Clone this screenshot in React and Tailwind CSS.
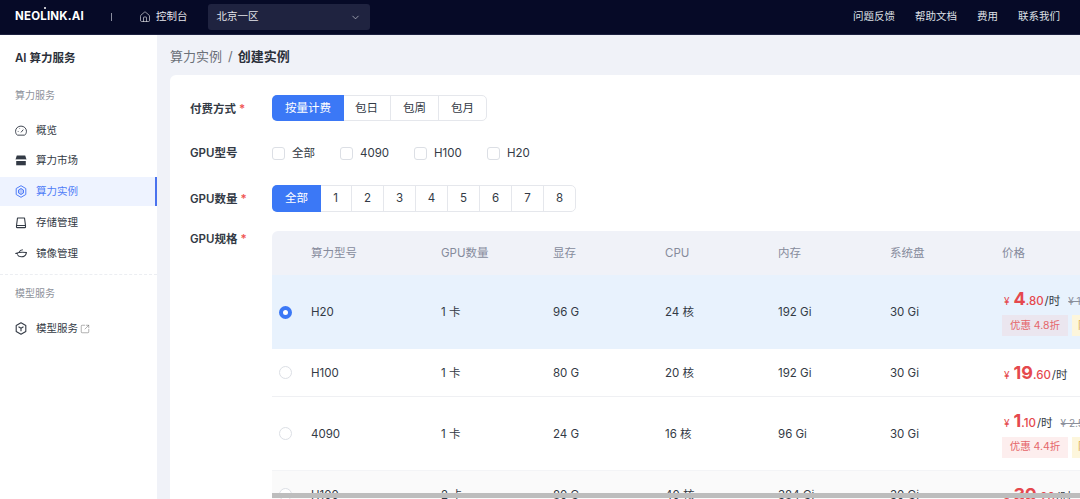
import React from "react";
import { House, ChevronDown, SquareArrowOutUpRight } from "lucide-react";

const font = { fontFamily: '"Inter","Noto Sans CJK SC",sans-serif' };
const cols = "grid grid-cols-[27px_130px_112px_112px_113px_112px_112px_300px]";

function GaugeIcon() {
  return (
    <svg width="13" height="12" viewBox="0 0 13 12" fill="none" stroke="currentColor" strokeWidth="1">
      <path d="M2.500 10.500C1.300 9.500.6 8 .6 6.300.6 3.100 3.200.7 6.500.7s5.900 2.400 5.900 5.600c0 1.700-.7 3.200-1.900 4.200z" />
      <path d="M6.500 7.500L9 4.500" />
      <path d="M3 6.500h.8M5 3.300l.4.5M8 3h.1" />
    </svg>
  );
}
function StoreIcon() {
  return (
    <svg width="12" height="11" viewBox="0 0 12 11" fill="currentColor">
      <path d="M1.800.6h8.400L11.500 4.500H.5z" />
      <path d="M1.200 6h9.600v4.300H1.200z" />
      <path d="M1.200 5h9.600" stroke="#fff" strokeWidth=".6" />
    </svg>
  );
}
function HexIcon() {
  return (
    <svg width="12" height="13" viewBox="0 0 12 13" fill="none" stroke="currentColor" strokeWidth="1">
      <path d="M6 .7l4.800 2.800v6L6 12.300 1.200 9.500v-6z" />
      <path d="M6 3.500l2.500 1.500v3L6 9.500 3.500 8V5z" fill="currentColor" fillOpacity=".35" />
    </svg>
  );
}
function DriveIcon() {
  return (
    <svg width="12" height="12" viewBox="0 0 12 12" fill="none" stroke="currentColor" strokeWidth="1.1">
      <path d="M2.500 1h7l1 7.500h-9z" strokeLinejoin="round" />
      <path d="M1.500 8.500v1.400c0 .4.300.7.700.7h7.600c.4 0 .7-.3.700-.7V8.500" />
    </svg>
  );
}
function MirrorIcon() {
  return (
    <svg width="13" height="11" viewBox="0 0 13 11" fill="none" stroke="currentColor" strokeWidth="1.1">
      <path d="M.6 5.500c2.500-1 8-1.800 11.800-1-.6 3-3 4.800-5.800 4.600C4.500 9 3 8 2.500 6.500" />
      <path d="M4.500 4c.6-1.500 2-2.500 4-2.500" />
      <path d="M.6 5.500H3" />
    </svg>
  );
}
function CubeIcon() {
  return (
    <svg width="12" height="13" viewBox="0 0 12 13" fill="none" stroke="currentColor" strokeWidth="1.1" strokeLinejoin="round">
      <path d="M6 .8l4.800 2.700v6L6 12.200 1.200 9.500v-6z" />
      <path d="M3.500 4.800L6 6.300l2.500-1.500M6 6.300v3" />
    </svg>
  );
}

function NavItem({ icon, label, active, ext }) {
  return (
    <div className={`flex items-center h-[29px] pl-[15px] gap-[9px] text-[10.5px] mb-[2px] ${active ? "bg-[#eef3ff] text-[#4f7cf7] border-r-2 border-[#4a72ee]" : "text-[#333a45]"}`}>
      <span className="w-[12px] flex justify-center">{icon}</span>
      <span>{label}</span>
      {ext && <SquareArrowOutUpRight size={10} strokeWidth={1.1} className="-ml-[7px] text-[#555]" />}
    </div>
  );
}

function Segment({ items, widths }) {
  return (
    <div className="flex h-full rounded-[5px] border border-[#e5e7ec] text-[11.5px] text-[#333a45]">
      {items.map((t, i) => (
        <div key={t} className={`flex items-center justify-center pt-px ${widths[i]} ${i === 0 ? "bg-[#3b78f6] text-white rounded-l-[5px] -m-px" : i > 1 ? "border-l border-[#e5e7ec]" : ""}`}>{t}</div>
      ))}
    </div>
  );
}

function Check({ label, cls }) {
  return (
    <div className={`flex items-center ${cls} text-[11.5px] text-[#333a45]`}>
      <span className="w-[13px] h-[13px] rounded-[3px] border border-[#dcdfe5] bg-white mr-[7px]" />
      <span className="pt-[2px]">{label}</span>
    </div>
  );
}

function Price({ int, dec, old, tag, selected }) {
  return (
    <div className="flex flex-col justify-center">
      <div className="flex items-baseline whitespace-nowrap text-[#e5484d] h-[22px]">
        <span className="text-[10px] mr-[4px] ml-[2px]">¥</span>
        <span className="text-[18px] font-bold leading-[22px]">{int}</span>
        <span className="text-[11.5px] font-medium">{dec}</span>
        <span className="text-[11.5px] text-[#333a45] ml-[1px]">/时</span>
        {old && <span className="text-[10px] text-[#8b8f9a] line-through ml-[8px]">{old}</span>}
      </div>
      {tag && (
        <div className="flex gap-[4px] mt-[5px]">
          <span className={`w-[66px] h-[21px] flex items-center justify-center text-[10.5px] text-[#e5676b] ${selected ? "bg-[#ebe6ef]" : "bg-[#fdeeee]"}`}>{tag}</span>
          <span className="w-[40px] h-[21px] bg-[#fdf6dc] text-[10.5px] text-[#d9a441] pl-[6px] flex items-center">限时</span>
        </div>
      )}
    </div>
  );
}

function Row({ data, h, cls, selected }) {
  return (
    <div className={`${cols} items-center text-[11.5px] text-[#333a45] ${cls}`} style={{ height: h }}>
      <div className="pl-[7px]">
        {selected ? (
          <span className="block w-[13px] h-[13px] rounded-full border-[4px] border-[#3b78f6] bg-white" />
        ) : (
          <span className="block w-[13px] h-[13px] rounded-full border border-[#dcdfe5] bg-white" />
        )}
      </div>
      {data.cells.map((c, i) => <div key={i} className="pl-[12px] pt-[2px]">{c}</div>)}
      <div className="pl-[12px]">{data.price}</div>
    </div>
  );
}

const labelCls = "w-[82px] text-[11.5px] font-semibold text-[#333a45]";

export default function App() {
  return (
    <div className="w-[1080px] h-[499px] overflow-hidden flex flex-col bg-[#f0f2f8]" style={font}>
      <header className="h-[35px] shrink-0 bg-[#060a27] border-b border-[#1d2140] flex items-center text-white">
        <div className="relative ml-[15px] w-[92px] text-[11.5px] font-bold tracking-[0.2px]">
          NEOLINK.AI
          <span className="absolute left-[29px] top-[-1px] w-[2px] h-[2px] rounded-full bg-white" />
        </div>
        <div className="w-px h-[8px] bg-[#8a8d9e] ml-[4px]" />
        <div className="flex items-center ml-[27px] text-[10.5px] text-[#e4e5ea]">
          <House size={12} strokeWidth={1.3} className="mr-[5px]" />
          控制台
        </div>
        <div className="ml-[20px] w-[162px] h-[26px] rounded-[3px] bg-[#1f2340] flex items-center justify-between pl-[9px] pr-[9px] text-[10.5px] text-[#e4e5ea]">
          北京一区
          <ChevronDown size={11} strokeWidth={1.3} />
        </div>
        <div className="ml-auto flex items-center text-[10.5px] text-[#dfe0e6] pr-[20px] gap-[20px]">
          <span>问题反馈</span><span>帮助文档</span><span>费用</span><span>联系我们</span>
        </div>
      </header>

      <div className="flex flex-1 min-h-0">
        <aside className="w-[157px] shrink-0 bg-white">
          <div className="pl-[15px] pt-[16px] text-[11.5px] font-semibold text-[#2b303a] leading-[14px]">AI 算力服务</div>
          <div className="pl-[15px] mt-[23px] text-[10px] text-[#8e929b] leading-[14px]">算力服务</div>
          <div className="mt-[14px]">
            <div className="-mb-px"><NavItem label="概览" icon={<GaugeIcon />} /></div>
            <NavItem label="算力市场" icon={<StoreIcon />} />
            <NavItem label="算力实例" active icon={<HexIcon />} />
            <NavItem label="存储管理" icon={<DriveIcon />} />
            <NavItem label="镜像管理" icon={<MirrorIcon />} />
          </div>
          <div className="border-t border-dashed border-[#eceef2] mt-[6px]" />
          <div className="pl-[15px] mt-[11px] text-[10px] text-[#8e929b] leading-[14px]">模型服务</div>
          <div className="mt-[14px]">
            <NavItem label="模型服务" ext icon={<CubeIcon />} />
          </div>
        </aside>

        <main className="flex-1 min-w-0 pl-[13px]">
          <div className="h-[40px] flex items-center text-[13px] text-[#6b7078] pt-[4px]">
            算力实例<span className="ml-[6px] mr-[5px]">/</span><span className="font-semibold text-[#2b303a]">创建实例</span>
          </div>
          <section className="relative bg-white rounded-tl-[6px] h-[424px] overflow-hidden pl-[20px] pt-[20px]">
            <div className="flex items-center h-[26px]">
              <div className={`${labelCls} pt-[3px]`}>付费方式 <span className="text-[#ef5350]">*</span></div>
              <Segment items={["按量计费", "包日", "包周", "包月"]} widths={["w-[72px]", "w-[47px]", "w-[48px]", "w-[48px]"]} />
            </div>
            <div className="flex items-center h-[26px] mt-[19px]">
              <div className={`${labelCls} pt-[2px]`}>GPU型号</div>
              <Check label="全部" cls="w-[68px]" />
              <Check label="4090" cls="w-[74px]" />
              <Check label="H100" cls="w-[73px]" />
              <Check label="H20" cls="w-[60px]" />
            </div>
            <div className="flex items-center h-[27px] mt-[19px]">
              <div className={`${labelCls} pt-[2px]`}>GPU数量 <span className="text-[#ef5350]">*</span></div>
              <Segment items={["全部", "1", "2", "3", "4", "5", "6", "7", "8"]} widths={["w-[49px]", "w-[31px]", "w-[32px]", "w-[32px]", "w-[32px]", "w-[32px]", "w-[32px]", "w-[32px]", "w-[32px]"]} />
            </div>
            <div className="flex mt-[19px]">
              <div className={`${labelCls} leading-[14px] pt-px`}>GPU规格 <span className="text-[#ef5350]">*</span></div>
              <div className="w-[808px] shrink-0">
                <div className={`${cols} items-center h-[44px] bg-[#f0f2f8] rounded-tl-[6px] text-[11.5px] text-[#868b9c]`}>
                  <div />
                  {["算力型号", "GPU数量", "显存", "CPU", "内存", "系统盘", "价格"].map((t) => (
                    <div key={t} className="pl-[12px] pt-[2px]">{t}</div>
                  ))}
                </div>
                <Row h={74} selected cls="bg-[#e8f2fd]" data={{ cells: ["H20", "1 卡", "96 G", "24 核", "192 Gi", "30 Gi"], price: <Price int="4" dec=".80" old="¥ 10.00" tag="优惠 4.8折" selected /> }} />
                <Row h={48} cls="bg-white border-b border-[#eff0f3]" data={{ cells: ["H100", "1 卡", "80 G", "20 核", "192 Gi", "30 Gi"], price: <Price int="19" dec=".60" /> }} />
                <Row h={74} cls="bg-white border-b border-[#f3f4f6]" data={{ cells: ["4090", "1 卡", "24 G", "16 核", "96 Gi", "30 Gi"], price: <Price int="1" dec=".10" old="¥ 2.50" tag="优惠 4.4折" /> }} />
                <Row h={47} cls="bg-[#fafafa]" data={{ cells: ["H100", "2 卡", "80 G", "40 核", "384 Gi", "30 Gi"], price: <Price int="39" dec=".20" /> }} />
              </div>
            </div>
            <div className="absolute left-[102px] right-0 bottom-[1px] h-[5px] bg-[#bdbdbd]" />
          </section>
        </main>
      </div>
    </div>
  );
}
